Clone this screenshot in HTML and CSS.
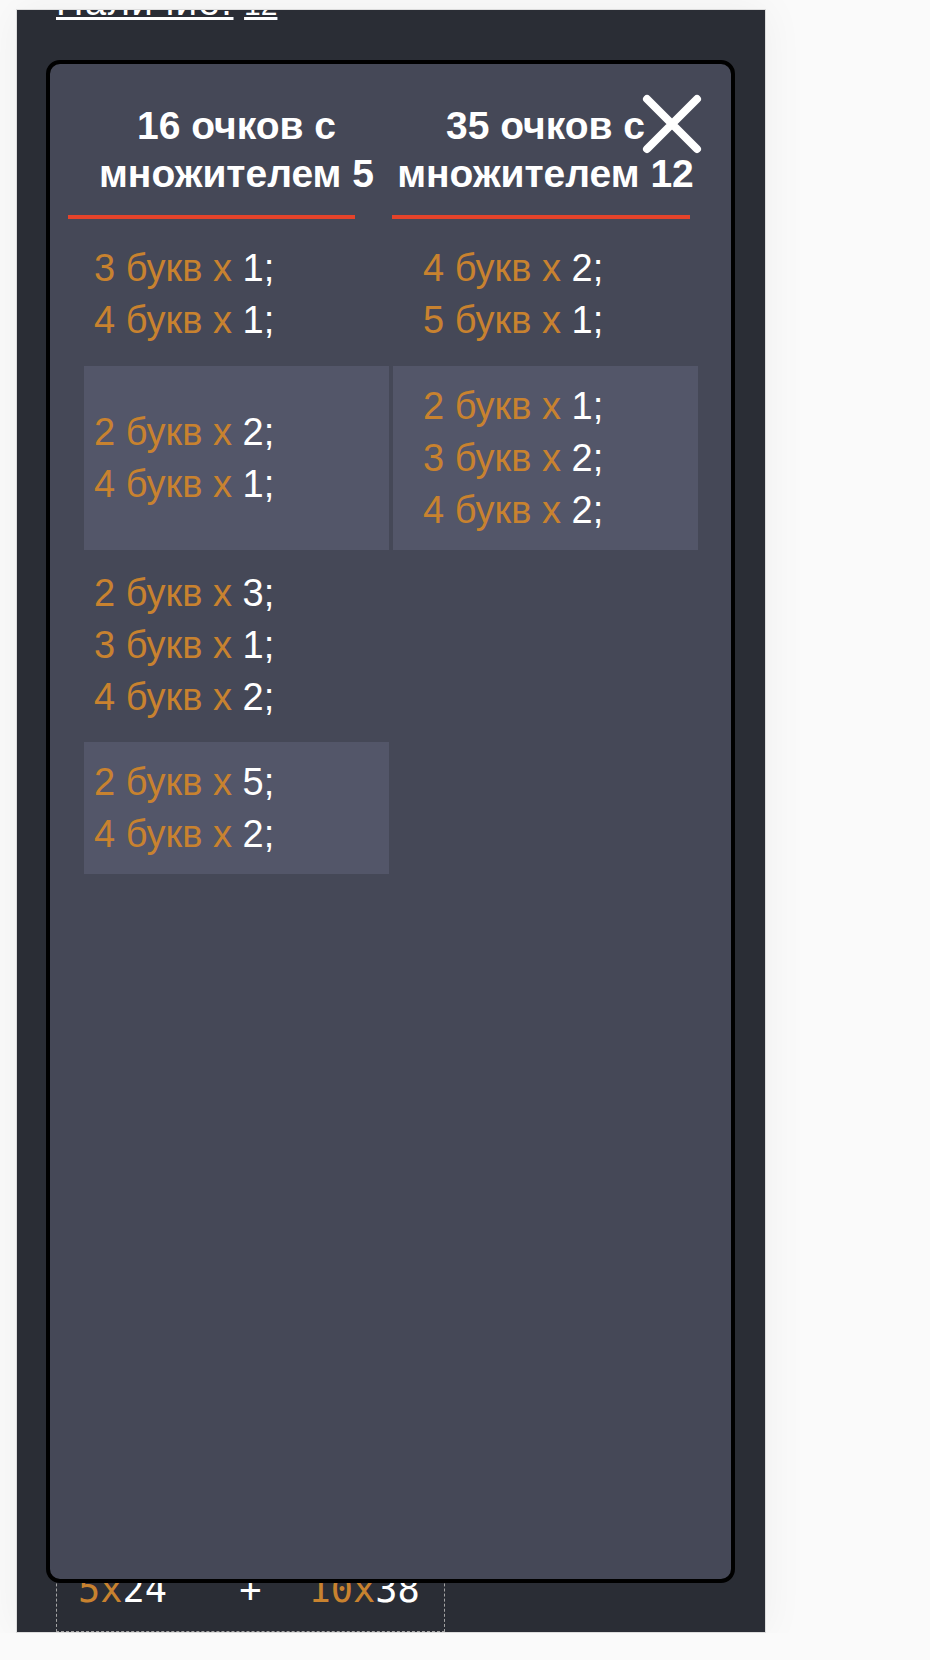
FILE: index.html
```html
<!DOCTYPE html>
<html lang="ru">
<head>
<meta charset="utf-8">
<title>Комбинации</title>
<link rel="stylesheet" href="styles.css">
</head>
<body>
<div class="panel">
  <div class="scroll">
    <div class="topline"><span class="u">Наличие:</span> <span class="u">12</span></div>
    <div class="formula">
      <span class="term"><span class="o">5x</span>24</span><span class="op">+</span><span class="term term2"><span class="o">10x</span>38</span>
    </div>
  </div>
  <div class="modal">
    <button class="close" aria-label="Закрыть">
      <svg width="60" height="60" viewBox="0 0 60 60"><path d="M5 5 L55 55 M55 5 L5 55" stroke="#fff" stroke-width="8" stroke-linecap="round" fill="none"/></svg>
    </button>
    <table class="combos">
      <colgroup><col class="col"><col class="col"></colgroup>
      <thead>
        <tr>
          <th class="h1"><div class="htext">16 очков с<br>множителем 5</div><div class="bar"></div></th>
          <th class="h2"><div class="htext">35 очков с<br>множителем 12</div><div class="bar"></div></th>
        </tr>
      </thead>
      <tbody>
        <tr>
          <td class="c1"><div class="ln"><span class="o">3 букв x</span> 1;</div><div class="ln"><span class="o">4 букв x</span> 1;</div></td>
          <td class="c2"><div class="ln"><span class="o">4 букв x</span> 2;</div><div class="ln"><span class="o">5 букв x</span> 1;</div></td>
        </tr>
        <tr class="alt">
          <td class="c1"><div class="ln"><span class="o">2 букв x</span> 2;</div><div class="ln"><span class="o">4 букв x</span> 1;</div></td>
          <td class="c2"><div class="ln"><span class="o">2 букв x</span> 1;</div><div class="ln"><span class="o">3 букв x</span> 2;</div><div class="ln"><span class="o">4 букв x</span> 2;</div></td>
        </tr>
        <tr class="r3">
          <td class="c1"><div class="ln"><span class="o">2 букв x</span> 3;</div><div class="ln"><span class="o">3 букв x</span> 1;</div><div class="ln"><span class="o">4 букв x</span> 2;</div></td>
        </tr>
        <tr class="alt">
          <td class="c1"><div class="ln"><span class="o">2 букв x</span> 5;</div><div class="ln"><span class="o">4 букв x</span> 2;</div></td>
        </tr>
      </tbody>
    </table>
  </div>
</div>
</body>
</html>
```
FILE: styles.css
```css
html, body {
  margin: 0;
  padding: 0;
  background: #fafafa;
}
body {
  padding: 9px 0 0 16px;
  font-family: "Liberation Sans", Arial, sans-serif;
}
.panel {
  position: relative;
  width: 750px;
  height: 1624px;
  box-sizing: border-box;
  border: 1px solid #dcdcdc;
  background: #2a2d35;
  overflow: hidden;
  box-shadow: 0 0 40px rgba(0,0,0,0.05);
}
.scroll {
  height: 100%;
  display: flex;
  flex-direction: column;
  justify-content: space-between;
  padding-left: 39px;
}
.topline {
  margin-top: -28px;
  font-size: 38px;
  line-height: 40px;
  color: #fff;
}
.u {
  display: inline-block;
  text-decoration: underline;
  text-decoration-thickness: 3px;
  text-underline-offset: 2px;
}
.u:first-child { letter-spacing: 1.6px; }
.u + .u { margin-left: 0; font-size: 30px; }
.formula {
  width: 389px;
  box-sizing: border-box;
  border: 1px dashed #a3a3a3;
  padding: 20px 20px 20px 21px;
  font-family: "DejaVu Sans Mono", monospace;
  font-size: 37px;
  line-height: 42px;
  color: #fff;
  display: flex;
}
.formula .op { margin-left: 72px; }
.formula .term2 { margin-left: 47px; }
.o { color: #c8822f; }

.modal {
  position: absolute;
  left: 29px;
  top: 50px;
  width: 689px;
  height: 1523px;
  box-sizing: border-box;
  border: 4px solid #000;
  border-radius: 14px;
  background: #454857;
  padding: 38px 0 0 30px;
}
.close {
  position: absolute;
  left: 592px;
  top: 30px;
  width: 60px;
  height: 60px;
  padding: 0;
  border: 0;
  background: none;
}
.close svg { display: block; }

.combos {
  width: 622px;
  table-layout: fixed;
  border-collapse: separate;
  border-spacing: 4px 6px;
  margin-top: -6px;
  color: #fff;
}
.col { width: 305px; }
th {
  padding: 0 0 3px 0;
  font-size: 39px;
  line-height: 48px;
  font-weight: bold;
  text-align: center;
  vertical-align: top;
}
.bar {
  height: 4px;
  margin-top: 17px;
  background: #e5432a;
}
.h1 .bar { margin-left: -16px; width: 287px; }
.h2 .bar { margin-left: -1px; width: 298px; }
td {
  padding: 14px 10px;
  font-size: 38px;
  line-height: 52px;
  text-align: left;
  vertical-align: middle;
  white-space: nowrap;
}
td.c2 { padding-left: 30px; }
.r3 td { padding-top: 11px; padding-bottom: 13px; }
.alt td { background: #535669; }
```
